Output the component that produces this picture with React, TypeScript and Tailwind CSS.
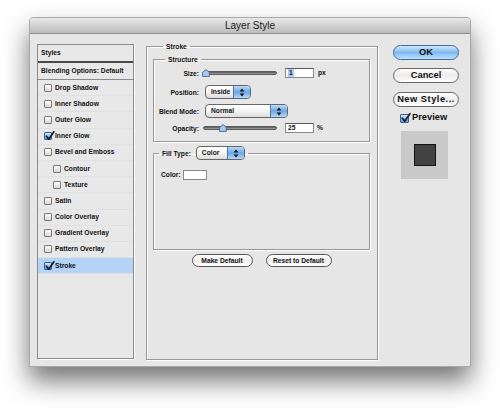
import clsx from "clsx";

type StyleRow = {
  label: string;
  checked?: boolean;
  indent?: boolean;
  selected?: boolean;
};

const styleRows: StyleRow[] = [
  { label: "Drop Shadow" },
  { label: "Inner Shadow" },
  { label: "Outer Glow" },
  { label: "Inner Glow", checked: true },
  { label: "Bevel and Emboss" },
  { label: "Contour", indent: true },
  { label: "Texture", indent: true },
  { label: "Satin" },
  { label: "Color Overlay" },
  { label: "Gradient Overlay" },
  { label: "Pattern Overlay" },
  { label: "Stroke", checked: true, selected: true },
];

const CheckBox = ({ checked, big }: { checked?: boolean; big?: boolean }) => (
  <div
    className={clsx(
      "relative shrink-0 rounded-[1px] border",
      big ? "w-[9px] h-[9px]" : "w-[8px] h-[8px]",
      checked
        ? "border-[#3d5f86] bg-linear-to-b from-[#d3e7fa] to-[#5f9bd8]"
        : "border-[#7a7a7a] bg-linear-to-b from-white to-[#d6d6d6]"
    )}
  >
    {checked && (
      <svg
        className="absolute left-[0px] top-[-2px]"
        width="10"
        height="10"
        viewBox="0 0 10 10"
      >
        <path
          d="M1.4 5.2 L3.7 8.2 L8.9 0.8"
          stroke="#101c2e"
          strokeWidth="1.7"
          fill="none"
          strokeLinecap="round"
          strokeLinejoin="round"
        />
      </svg>
    )}
  </div>
);

const Slider = ({ at }: { at: number }) => (
  <div className="relative h-[8px] w-[74px] shrink-0">
    <div className="absolute left-0 right-0 top-[2px] h-[4px] rounded-full border border-[#5c5c5c] bg-linear-to-b from-[#555] to-[#a5a5a5]" />
    <svg
      className="absolute top-0"
      style={{ left: at }}
      width="8"
      height="8"
      viewBox="0 0 8 8"
    >
      <path
        d="M4 0.6 L7.4 3.4 L7.4 7.4 L0.6 7.4 L0.6 3.4 Z"
        fill="#a3ccf2"
        stroke="#3f628c"
        strokeWidth="0.9"
        strokeLinejoin="round"
      />
    </svg>
  </div>
);

const Popup = ({ text, width }: { text: string; width: string }) => (
  <div
    className={clsx(
      "flex h-[14px] shrink-0 overflow-hidden rounded-[4px] border border-[#666] bg-linear-to-b from-white via-[#f4f4f4] to-[#dcdcdc]",
      width
    )}
  >
    <div className="flex-1 pl-[5px] text-[6.7px] font-bold leading-[12px]">
      {text}
    </div>
    <div className="flex w-[17px] items-center justify-center border-l border-[#4f77a3] bg-linear-to-b from-[#b9dbf9] via-[#6aa8e8] to-[#b3d8fa]">
      <svg width="6" height="9" viewBox="0 0 6 9">
        <path d="M3 0.6 L5.4 3.6 H0.6 Z M3 8.4 L5.4 5.4 H0.6 Z" fill="#111" />
      </svg>
    </div>
  </div>
);

const NumberBox = ({ value, selected }: { value: string; selected?: boolean }) => (
  <div className="ml-[8px] flex h-[10px] w-[29px] shrink-0 items-center border border-[#8a8a8a] border-t-[#5a5a5a] bg-white pl-[2px] text-[6.7px] font-bold leading-[8px]">
    <span className={clsx(selected && "bg-[#a9cdf5] px-[1px]")}>{value}</span>
  </div>
);

const Label = ({ children }: { children: string }) => (
  <div className="w-[45px] shrink-0 text-right text-[6.7px] font-bold leading-[9px]">
    {children}
  </div>
);

const AquaButton = ({
  children,
  primary,
  wide,
}: {
  children: string;
  primary?: boolean;
  wide?: boolean;
}) => (
  <div
    className={clsx(
      "flex h-[15px] w-[66px] items-center justify-center rounded-full border text-[9.3px] font-bold leading-[13px]",
      wide && "tracking-[0.5px]",
      primary
        ? "border-[#3e6c9f] bg-linear-to-b from-[#d0e8fc] via-[#7db9ee] to-[#c2e1fc]"
        : "border-[#666] bg-linear-to-b from-white via-[#ececec] to-white"
    )}
  >
    {children}
  </div>
);

const SmallButton = ({ children, width }: { children: string; width: string }) => (
  <div
    className={clsx(
      "flex h-[13px] items-center justify-center rounded-full border border-[#555] bg-linear-to-b from-white via-[#efefef] to-white text-[6.7px] font-bold leading-[9px]",
      width
    )}
  >
    {children}
  </div>
);

export default function App() {
  return (
    <div className="h-[408px] w-[500px] bg-white pl-[29px] pt-[17px] font-['Liberation_Sans',Arial,sans-serif] text-[#111]">
      <div className="flex h-[350px] w-[442px] flex-col rounded-t-[4px] border border-[#a9a9a9] bg-[#e6e6e6] shadow-[0_14px_26px_rgba(0,0,0,0.55)]">
        <div className="h-[16px] rounded-t-[3px] border-b border-[#8e8e8e] bg-linear-to-b from-[#e8e8e8] to-[#bcbcbc] text-center text-[10px] leading-[15px] text-[#1a1a1a]">
          Layer Style
        </div>

        <div className="flex items-start pl-[7px] pt-[8px]">
          {/* styles list */}
          <div className="mt-[2px] h-[315px] w-[97px] border border-[#8a8a8a] bg-[#e8e8e8] shadow-[1px_1px_0_#fff]">
            <div className="flex h-[18px] items-center border-b-2 border-[#4a4a4a] pl-[3px] text-[6.7px] font-bold">
              Styles
            </div>
            <div className="flex h-[17px] items-center border-b border-[#8a8a8a] pl-[3px] text-[6.7px] font-bold">
              Blending Options: Default
            </div>
            {styleRows.map((r) => (
              <div
                key={r.label}
                className={clsx(
                  "flex h-[16.2px] items-center gap-[3px] border-b border-[#e0e0e0] text-[6.7px] font-bold",
                  r.indent ? "pl-[15px]" : "pl-[6px]",
                  r.selected && "bg-[#b4d4f7]"
                )}
              >
                <CheckBox checked={r.checked} />
                <span>{r.label}</span>
              </div>
            ))}
          </div>

          {/* stroke panel */}
          <fieldset className="ml-[12px] h-[318px] w-[232px] border border-[#979797] pl-[6px] pr-[7px] pt-[4px] shadow-[1px_1px_0_#fff,inset_1px_1px_0_#fff]">
            <legend className="ml-[10px] px-[3px] text-[6.7px] font-bold leading-[9px]">
              Stroke
            </legend>

            <fieldset className="border border-[#979797] pb-[7px] shadow-[1px_1px_0_#fff,inset_1px_1px_0_#fff]">
              <legend className="ml-[11px] px-[3px] text-[6.7px] font-bold leading-[9px]">
                Structure
              </legend>
              <div className="mt-[3px] flex h-[12px] items-center">
                <Label>Size:</Label>
                <div className="ml-[4px]">
                  <Slider at={-1} />
                </div>
                <NumberBox value="1" selected />
                <span className="ml-[4px] text-[6.7px] font-bold">px</span>
              </div>
              <div className="mt-[6px] flex h-[14px] items-center">
                <Label>Position:</Label>
                <div className="ml-[6px]">
                  <Popup text="Inside" width="w-[46px]" />
                </div>
              </div>
              <div className="mt-[5px] flex h-[14px] items-center">
                <Label>Blend Mode:</Label>
                <div className="ml-[6px]">
                  <Popup text="Normal" width="w-[83px]" />
                </div>
              </div>
              <div className="mt-[4px] flex h-[12px] items-center">
                <Label>Opacity:</Label>
                <div className="ml-[4px]">
                  <Slider at={16} />
                </div>
                <NumberBox value="25" />
                <span className="ml-[3px] text-[6.7px] font-bold">%</span>
              </div>
            </fieldset>

            <fieldset className="mt-[4px] h-[104px] border border-[#979797] shadow-[1px_1px_0_#fff,inset_1px_1px_0_#fff]">
              <legend className="ml-[5px] px-[3px]">
                <span className="flex items-center">
                  <span className="text-[6.7px] font-bold leading-[9px]">Fill Type:</span>
                  <span className="ml-[5px]">
                    <Popup text="Color" width="w-[49px]" />
                  </span>
                </span>
              </legend>
              <div className="mt-[10px] flex h-[10px] items-center pl-[7px]">
                <span className="text-[6.7px] font-bold">Color:</span>
                <div className="ml-[2.5px] h-[10px] w-[24px] border border-[#8a8a8a] bg-white" />
              </div>
            </fieldset>

            <div className="mt-[4px] flex justify-center gap-[13px]">
              <SmallButton width="w-[61px]">Make Default</SmallButton>
              <SmallButton width="w-[66px]">Reset to Default</SmallButton>
            </div>
          </fieldset>

          {/* buttons */}
          <div className="ml-[15px] mt-[3px] flex w-[66px] flex-col">
            <AquaButton primary>OK</AquaButton>
            <div className="mt-[8px]">
              <AquaButton>Cancel</AquaButton>
            </div>
            <div className="mt-[9px]">
              <AquaButton wide>New Style...</AquaButton>
            </div>
            <div className="mt-[5px] flex h-[12px] items-center pl-[7px]">
              <CheckBox checked big />
              <span className="ml-[3px] text-[9.3px] font-bold">Preview</span>
            </div>
            <div className="ml-[8px] mt-[7px] flex h-[48px] w-[47px] items-center justify-center bg-[#c9c9c9]">
              <div className="h-[22px] w-[22px] border border-[#111] bg-[#424242]" />
            </div>
          </div>
        </div>
      </div>
    </div>
  );
}
